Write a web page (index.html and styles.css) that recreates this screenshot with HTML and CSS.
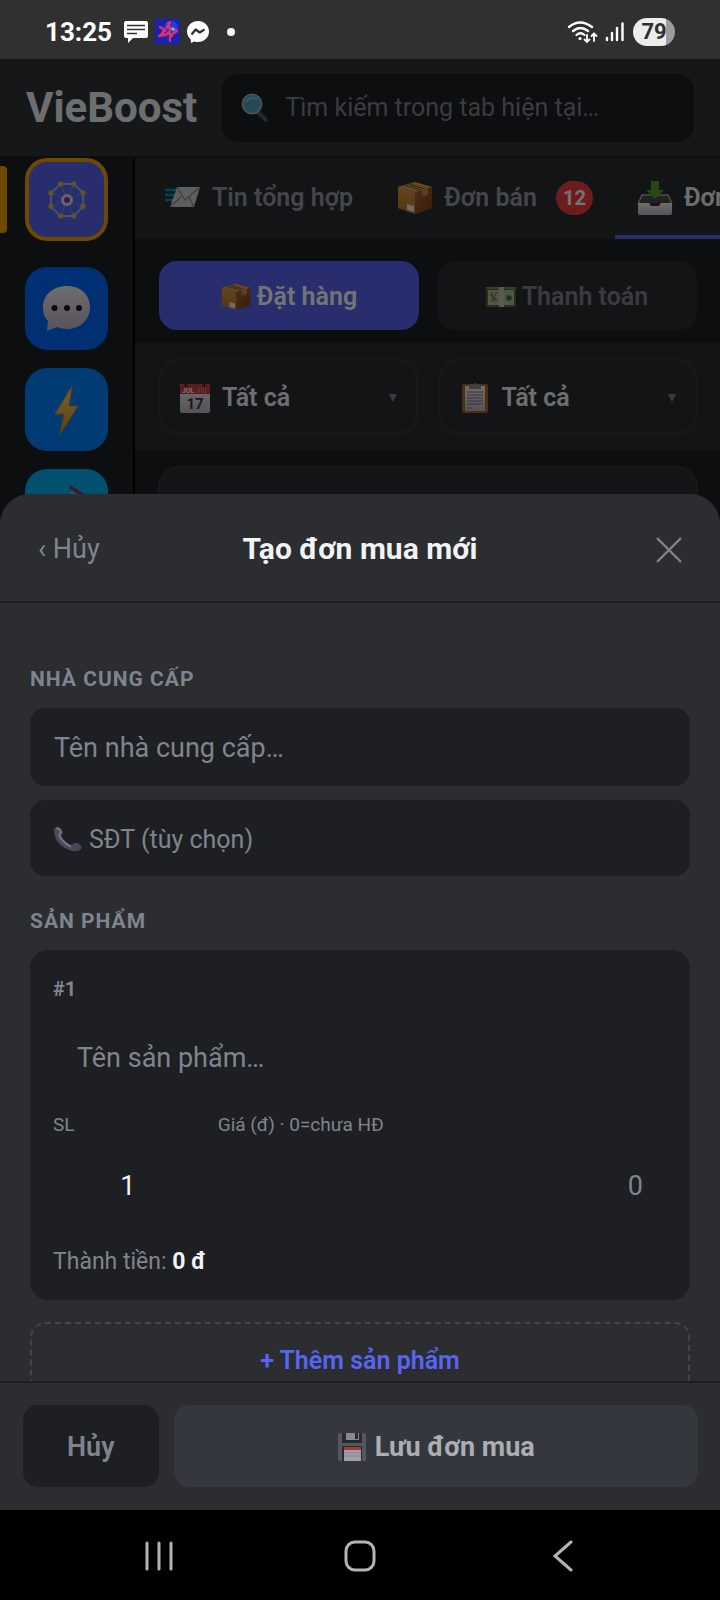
FILE: index.html
```html
<!DOCTYPE html>
<html lang="vi">
  <head>
    <meta charset="UTF-8" />
    <meta name="viewport" content="width=device-width, initial-scale=1.0" />
    <title>VieBoost</title>
    <link rel="stylesheet" href="styles.css">
  </head>
  <body>
    <svg class="sprite" width="0" height="0" aria-hidden="true">
      <defs>
        <linearGradient id="boxLeft" x1="0" y1="0" x2="0" y2="1">
          <stop offset="0" stop-color="#d99a4e" />
          <stop offset="1" stop-color="#bb7429" />
        </linearGradient>
        <linearGradient id="boxRight" x1="0" y1="0" x2="1" y2="1">
          <stop offset="0" stop-color="#a9682b" />
          <stop offset="1" stop-color="#7e4023" />
        </linearGradient>
        <linearGradient id="silver" x1="0" y1="0" x2="0" y2="1">
          <stop offset="0" stop-color="#f4f2f3" />
          <stop offset="1" stop-color="#c2b8c8" />
        </linearGradient>
        <linearGradient id="gold" x1="0" y1="0" x2="0" y2="1">
          <stop offset="0" stop-color="#ffd985" />
          <stop offset="1" stop-color="#e28a18" />
        </linearGradient>
      </defs>
      <symbol id="box" viewBox="0 0 36 36">
        <path d="M1 7 18 2 35 7v21L18 34 1 28Z" fill="#b3742e" />
        <path d="M1 7 18 12v22L1 28Z" fill="url(#boxLeft)" />
        <path d="M18 12 35 7v21L18 34Z" fill="url(#boxRight)" />
        <path d="M1 7 18 2 35 7 18 12Z" fill="#d9a055" />
        <path d="m8 5 16 5M12 4l16 5" stroke="#70481f" stroke-width="1" />
        <path d="m25 10 6-2v6l-3 2-3-1Z" fill="#c8924d" />
        <path d="m10 24 7 2v6l-7-2Z" fill="#f2ece5" />
      </symbol>
    </svg>

    <div class="status-bar">
      <div class="status-left">
        <span class="clock">13:25</span>
        <svg width="24" height="22" viewBox="0 0 24 22">
          <path d="M2 0h20q2 0 2 2v13q0 2-2 2H9l-5 5v-5H2q-2 0-2-2V2q0-2 2-2Z" fill="#fff" />
          <path d="M3 4.500h18M3 8.500h18M3 12.500h10" stroke="#303030" stroke-width="1.600" />
        </svg>
        <svg width="25" height="25" viewBox="0 0 25 25">
          <rect width="25" height="25" fill="#1a22b4" />
          <circle cx="16" cy="9" r="7" fill="#1e50e0" opacity=".7" />
          <path d="m15 3-3 6M5 8l5 3M4 17l6-5M12 8l5 2M5 17l6-1M15 22v-5M17 17l-4-3M22 12l-6 4M22 12l-6-3M8 12l1 4M15 12l-4 4M13 4l2 6" fill="none" stroke="#e92f62" stroke-width="2.200" stroke-linecap="round" />
          <circle cx="18" cy="10" r="1.500" fill="#68c8ff" />
        </svg>
        <svg width="22" height="22" viewBox="0 0 22 22">
          <path d="M11 0C5 0 0 4.400 0 10.400c0 3.200 1.400 5.900 3.600 7.700L4 22l3.200-1.600c1.200.4 2.500.5 3.800.5 6 0 11-4.500 11-10.500S17 0 11 0Z" fill="#fff" />
          <path d="m4.500 13.500 4.200-5 4 3 4.800-3.200" fill="none" stroke="#303030" stroke-width="2.200" stroke-linejoin="round" />
        </svg>
        <span class="status-dot"></span>
      </div>
      <div class="status-right">
        <svg width="31" height="24" viewBox="0 0 31 24" fill="none" stroke="#fff" stroke-width="2.300" stroke-linecap="round">
          <path d="M2 7q11-9 23 0M6 11q7.500-6 15 0M9.500 15q4-3.500 8 0" />
          <circle cx="13" cy="18.500" r="1.600" fill="#fff" stroke="none" />
          <path d="M20 15v7m-2.500-2.500L20 22l2.500-2.500M27 21v-7.500M24.500 16l2.500-2.500 2.500 2.500" stroke-width="1.800" />
        </svg>
        <svg width="19" height="20" viewBox="0 0 19 20" stroke="#fff" stroke-width="2.400" stroke-linecap="round">
          <path d="M2 16v2M7 11v7M12 6v12M17.500 1.500V18" />
        </svg>
        <span class="battery">79</span>
      </div>
    </div>

    <div class="app">
      <header class="header">
        <div class="logo">VieBoost</div>
        <label class="search">
          <svg width="28" height="30" viewBox="0 0 28 30">
            <path d="m17 19 8 8" stroke="#59525f" stroke-width="4" stroke-linecap="round" />
            <circle cx="11" cy="11" r="9.500" fill="#4fa5bd" stroke="#9cb5bb" stroke-width="2" />
            <path d="M5 9q4-6 11-3" stroke="#80cadc" stroke-width="2" fill="none" />
          </svg>
          <input type="text" placeholder="Tìm kiếm trong tab hiện tại…" aria-label="Tìm kiếm">
        </label>
      </header>

      <div class="layout">
        <nav class="sidebar">
          <button class="tile tile-main active" aria-label="Tổng quan">
            <svg width="38" height="38" viewBox="0 0 38 38">
              <path d="M12.500 3h13.400L35 12v13.500L25.900 35H12.500L3 25.500V12Z" fill="none" stroke="#a9adeb" stroke-width="2" />
              <path d="M12.500 3l13.400 32M25.900 3 12.500 35M3 12l32 13.500M3 25.500 35 12" stroke="#7e86e4" stroke-width="1.200" />
              <g fill="#c7b960">
                <circle cx="12.500" cy="3" r="2.700" /><circle cx="25.900" cy="3" r="2.700" />
                <circle cx="35" cy="12" r="2.700" /><circle cx="35" cy="25.500" r="2.700" />
                <circle cx="25.900" cy="35" r="2.700" /><circle cx="12.500" cy="35" r="2.700" />
                <circle cx="3" cy="25.500" r="2.700" /><circle cx="3" cy="12" r="2.700" />
              </g>
              <circle cx="19" cy="19" r="6" fill="#e3e2e8" />
              <circle cx="19" cy="19" r="3" fill="#7a37cc" />
            </svg>
          </button>
          <button class="tile tile-zalo" aria-label="Tin nhắn">
            <svg width="48" height="46" viewBox="0 0 48 46">
              <path d="M24 0C10 0 0 9 0 21c0 7 2 11 5 14l-1 10 10-4c3 1 6 2 10 2 14 0 23-10 23-22S38 0 24 0Z" fill="url(#silver)" />
              <circle cx="11.500" cy="22" r="3" fill="#1b1022" /><circle cx="24" cy="22" r="3" fill="#1b1022" /><circle cx="36" cy="22" r="3" fill="#1b1022" />
            </svg>
          </button>
          <button class="tile tile-fb" aria-label="Nhanh">
            <svg width="26" height="50" viewBox="0 0 26 50">
              <path d="M18 1 1 29h9L6 49 24 21h-9Z" fill="url(#gold)" stroke="#ce8923" stroke-width="1" stroke-linejoin="round" />
            </svg>
          </button>
          <button class="tile tile-post" aria-label="Bưu phẩm">
            <svg width="50" height="50" viewBox="0 0 50 50">
              <rect x="3" y="8" width="26" height="36" rx="2" fill="#a36c4b" />
              <path d="M3 9h26" stroke="#e0a37b" stroke-width="2" />
              <path d="m29 6 16 10v25H29Z" fill="#c9c5d0" />
              <path d="m28 1 18 11" stroke="#b31f43" stroke-width="3" />
            </svg>
          </button>
        </nav>

        <main class="content">
          <div class="tabs">
            <button class="tab">
              <svg width="36" height="24" viewBox="0 0 36 24">
                <path d="M0 4h14M0 9h12M0 14h10" stroke="#0a94c2" stroke-width="2.400" />
                <path d="M12 1h23l-6 20H5Z" fill="#d2d0d1" />
                <path d="m12 1 8 13L35 1M5 21l11-10M29 21l-5-10" fill="none" stroke="#88868a" stroke-width="1.200" />
              </svg>
              Tin tổng hợp
            </button>
            <button class="tab">
              <svg width="36" height="36"><use href="#box" /></svg>
              Đơn bán
              <span class="badge">12</span>
            </button>
            <button class="tab active">
              <svg width="36" height="36" viewBox="0 0 36 36">
                <path d="M5 15h26l4 8H1Z" fill="#4b474e" />
                <path d="M1 24 5 15h26l4 9" fill="none" stroke="#aaa6ac" stroke-width="1.600" />
                <path d="M1 23h11l2 3h8l2-3h11v10q0 2-2 2H3q-2 0-2-2Z" fill="url(#silver)" />
                <path d="M14 1h8v9h5l-9 9-9-9h5Z" fill="#5b9f24" />
              </svg>
              Đơn mua
            </button>
          </div>

          <div class="segments">
            <button class="segment active">
              <svg width="30" height="30"><use href="#box" /></svg>
              Đặt hàng
            </button>
            <button class="segment">
              <svg width="30" height="22" viewBox="0 0 30 22">
                <rect y="2" width="30" height="19" rx="1" fill="#536c39" />
                <rect x="2" y="4" width="26" height="15" fill="#b5bc98" />
                <path d="M0 2h30" stroke="#75944f" stroke-width="2" />
                <path d="M7 6q-3 2 0 5t0 5M4 8l7 6M11 6l-6 9" stroke="#68765b" stroke-width="1.300" fill="none" />
                <circle cx="23" cy="12" r="2.700" fill="#357347" />
                <path d="M13 1h5v20h-5Z" fill="#c9c5b8" />
              </svg>
              Thanh toán
            </button>
          </div>

          <div class="filters">
            <label class="filter">
              <svg width="30" height="30" viewBox="0 0 30 30">
                <rect y="1" width="30" height="29" rx="2" fill="url(#silver)" />
                <path d="M0 11V3q0-2 2-2h26q2 0 2 2v8Z" fill="#cf3c44" />
                <path d="M6 0v4M24 0v4" stroke="#601f25" stroke-width="3" />
                <path d="M17 5h10M17 7h10M17 9h10" stroke="#e8a0a2" stroke-dasharray="1 1" />
                <text class="cal-month" x="2" y="10">JUL</text>
                <text class="cal-day" x="15" y="26">17</text>
              </svg>
              <select aria-label="Thời gian"><option>Tất cả</option></select>
              <svg class="arrow" width="8" height="8" viewBox="0 0 8 8"><path d="M0 0h8L4 8Z" /></svg>
            </label>
            <label class="filter">
              <svg width="30" height="32" viewBox="0 0 30 32">
                <rect x="2" y="2" width="26" height="29" rx="2" fill="#ad6726" />
                <path d="M5 4h20v25H5Z" fill="url(#silver)" />
                <path d="M7 10h16M7 13h16M7 16h16M7 19h16M7 22h16M7 26h6" stroke="#77727c" stroke-width="1.200" />
                <path d="M9 7V3h4q2-4 4 0h4v4Z" fill="#918d94" />
              </svg>
              <select aria-label="Trạng thái"><option>Tất cả</option></select>
              <svg class="arrow" width="8" height="8" viewBox="0 0 8 8"><path d="M0 0h8L4 8Z" /></svg>
            </label>
          </div>

          <div class="orders">
            <div class="order-card"></div>
          </div>
        </main>
      </div>

      <div class="overlay">
        <form class="sheet">
          <div class="sheet-header">
            <button type="button" class="back-btn">‹ Hủy</button>
            <h1 class="sheet-title">Tạo đơn mua mới</h1>
            <button type="button" class="close-btn" aria-label="Đóng">
              <svg width="26" height="26" viewBox="0 0 26 26" stroke="currentColor" stroke-width="2.400">
                <path d="m1 1 24 24M25 1 1 25" />
              </svg>
            </button>
          </div>

          <div class="sheet-body">
            <label class="section-label" for="supplier">NHÀ CUNG CẤP</label>
            <input class="field" id="supplier" type="text" placeholder="Tên nhà cung cấp…">
            <label class="phone-field">
              <svg width="28" height="26" viewBox="0 0 28 26">
                <path d="M1 2q4-4 8 4 0 2-2 4 4 7 11 9 2-3 4-2 7 2 5 6-4 4-12 1Q1 18 0 6q0-3 1-4Z" fill="#4c4659" />
                <path d="M2 3q3-2 5 3L5 9q3 7 12 12" stroke="#77737e" stroke-width="2" fill="none" />
              </svg>
              <input type="tel" placeholder="SĐT (tùy chọn)" aria-label="SĐT">
            </label>

            <div class="section-label">SẢN PHẨM</div>
            <div class="product">
              <div class="product-index">#1</div>
              <input class="field" type="text" placeholder="Tên sản phẩm…" aria-label="Tên sản phẩm">
              <div class="product-row">
                <label class="cell">
                  SL
                  <input class="field qty" type="text" inputmode="numeric" value="1">
                </label>
                <label class="cell">
                  Giá (đ) · 0=chưa HĐ
                  <input class="field price" type="text" inputmode="numeric" placeholder="0">
                </label>
              </div>
              <div class="product-total">Thành tiền: <strong>0 đ</strong></div>
            </div>
            <button type="button" class="add-btn">+ Thêm sản phẩm</button>
          </div>

          <div class="sheet-footer">
            <button type="button" class="cancel-btn">Hủy</button>
            <button type="submit" class="save-btn" disabled>
              <svg width="30" height="30" viewBox="0 0 30 30">
                <path d="M3 1h24l2 2v26H3q-2 0-2-2V3q0-2 2-2Z" fill="#55575e" />
                <path d="M5 1h20v10H5ZM5 14h20v15H5Z" fill="#292a2f" />
                <path d="M9 1h13v7H9Z" fill="#88898d" />
                <path d="M18 1h3v6h-3Z" fill="#292a2f" />
                <path d="M7 15h17v14H7Z" fill="#a0a0aa" />
                <path d="M7 15h17v3H7Z" fill="#a83840" />
                <path d="M7 21h17M7 24h17" stroke="#888892" />
              </svg>
              Lưu đơn mua
            </button>
          </div>
        </form>
      </div>
    </div>

    <nav class="nav-bar">
      <button aria-label="Gần đây">
        <svg width="32" height="32" viewBox="0 0 32 32"><path d="M4 3v26M16 3v26M28 3v26" /></svg>
      </button>
      <button aria-label="Trang chủ">
        <svg width="32" height="32" viewBox="0 0 32 32"><rect x="2" y="2" width="28" height="28" rx="9" /></svg>
      </button>
      <button aria-label="Quay lại">
        <svg width="32" height="32" viewBox="0 0 32 32"><path d="M26 2 10 16l16 14" /></svg>
      </button>
    </nav>
  </body>
</html>
```
FILE: styles.css
```css
* {
  margin: 0;
  padding: 0;
  box-sizing: border-box;
}

body {
  display: flex;
  flex-direction: column;
  height: 100vh;
  background: #000;
  color: #f2f3f5;
  font-family: Roboto, "Noto Sans", sans-serif;
  overflow: hidden;
}

button,
input,
select {
  background: none;
  border: none;
  outline: none;
  color: inherit;
  font: inherit;
}

button {
  cursor: pointer;
}

svg {
  flex-shrink: 0;
}

.sprite {
  position: absolute;
}

/* Status bar */
.status-bar {
  display: flex;
  align-items: center;
  justify-content: space-between;
  flex-shrink: 0;
  height: 59px;
  padding: 4px 45px 0;
  background: #303030;
  color: #fff;
}

.status-left,
.status-right {
  display: flex;
  align-items: center;
  gap: 7px;
}

.clock {
  margin-right: 5px;
  font-size: 26px;
  font-weight: 700;
}

.status-dot {
  width: 8px;
  height: 8px;
  margin-left: 11px;
  border-radius: 50%;
  background: #fff;
}

.battery {
  width: 42px;
  margin-left: 2px;
  border-radius: 14px;
  background: linear-gradient(90deg, #ededed 79%, #9c9c9c 79%);
  color: #303030;
  font-size: 22px;
  font-weight: 700;
  line-height: 28px;
  text-align: center;
}

/* App */
.app {
  position: relative;
  display: flex;
  flex-direction: column;
  flex: 1;
  min-height: 0;
  overflow: hidden;
  background: #1e1f22;
}

.header {
  display: flex;
  align-items: center;
  flex-shrink: 0;
  gap: 25px;
  height: 99px;
  padding: 0 26px;
  background: #313338;
  border-bottom: 2px solid #1e1f22;
}

.logo {
  font-size: 42px;
  font-weight: 700;
}

.search {
  display: flex;
  align-items: center;
  flex: 1;
  gap: 16px;
  height: 68px;
  padding: 0 19px;
  border-radius: 16px;
  background: #1e1f22;
}

.search input {
  flex: 1;
  min-width: 0;
  font-size: 25px;
}

input::placeholder {
  color: #80848e;
  opacity: 1;
}

.layout {
  display: flex;
  flex: 1;
  min-height: 0;
}

.sidebar {
  display: flex;
  flex-direction: column;
  align-items: center;
  gap: 18px;
  width: 135px;
  flex-shrink: 0;
  border-right: 2px solid #000;
}

.tile {
  display: flex;
  align-items: center;
  justify-content: center;
  flex-shrink: 0;
  width: 83px;
  height: 83px;
  border-radius: 22px;
}

.tile-main {
  position: relative;
  margin-bottom: 8px;
  background: #5865f2;
}

.tile-main.active {
  border: 4px solid #f59f0b;
}

.tile-main.active::before {
  content: "";
  position: absolute;
  top: 4px;
  left: -29px;
  width: 7px;
  height: 67px;
  border-radius: 0 4px 4px 0;
  background: #f59f0b;
}

.tile-zalo {
  background: #0068ff;
}

.tile-fb {
  background: #0084ff;
}

.tile-post {
  background: #00b4f5;
}

.content {
  flex: 1;
  min-width: 0;
}

.tabs {
  display: flex;
  height: 81px;
  padding: 0 8px;
  background: #2b2d31;
  overflow: hidden;
}

.tab {
  display: flex;
  align-items: center;
  flex-shrink: 0;
  gap: 11px;
  padding: 2px 22px 0;
  border-bottom: 4px solid transparent;
  color: #949ba4;
  font-size: 25px;
  font-weight: 600;
}

.tab.active {
  border-color: #5865f2;
  color: #f2f3f5;
}

.badge {
  min-width: 37px;
  margin-left: 8px;
  border-radius: 17px;
  background: #f23f43;
  color: #fff;
  font-size: 20px;
  font-weight: 700;
  line-height: 34px;
  text-align: center;
}

.segments {
  display: flex;
  gap: 18px;
  padding: 22px 23px 13px 24px;
}

.segment {
  display: flex;
  align-items: center;
  justify-content: center;
  flex: 1;
  gap: 6px;
  height: 69px;
  padding-top: 2px;
  border-radius: 18px;
  background: #2b2d31;
  color: #80848e;
  font-size: 25px;
  font-weight: 600;
}

.segment.active {
  background: #5865f2;
  color: #fff;
}

.filters {
  display: flex;
  gap: 19px;
  padding: 15px 22px 15px 23px;
  background: #2b2d31;
}

.filter {
  display: flex;
  align-items: center;
  flex: 1;
  gap: 12px;
  height: 77px;
  min-width: 0;
  padding: 2px 19px 0;
  border: 3px solid #35373c;
  border-radius: 22px;
}

.filter select {
  flex: 1;
  min-width: 0;
  appearance: none;
  font-size: 25px;
  font-weight: 600;
}

.arrow {
  fill: #80848e;
}

.cal-month {
  fill: #fff;
  font-size: 7px;
  font-weight: 700;
}

.cal-day {
  fill: #3a3a3e;
  font-size: 15px;
  font-weight: 700;
  text-anchor: middle;
}

.orders {
  padding: 16px 22px 16px 23px;
}

.order-card {
  height: 240px;
  border: 2px solid #35373c;
  border-radius: 22px;
  background: #2b2d31;
}

/* Bottom sheet */
.overlay {
  position: absolute;
  inset: 0;
  display: flex;
  align-items: flex-end;
  background: rgba(0, 0, 0, 0.55);
}

.sheet {
  display: flex;
  flex-direction: column;
  width: 100%;
  height: 70%;
  border-radius: 30px 30px 0 0;
  background: #2b2d31;
}

.sheet-header {
  display: grid;
  grid-template-columns: 1fr auto 1fr;
  align-items: center;
  flex-shrink: 0;
  height: 109px;
  padding: 2px 38px 0;
  border-bottom: 2px solid #1e1f22;
}

.back-btn {
  justify-self: start;
  color: #80848e;
  font-size: 27px;
}

.sheet-title {
  font-size: 30px;
  font-weight: 700;
}

.close-btn {
  display: flex;
  justify-self: end;
  padding-top: 2px;
  color: #80848e;
}

.sheet-body {
  flex: 1;
  min-height: 0;
  padding: 31px 30px 0;
  overflow: hidden;
}

.section-label {
  display: block;
  margin: 31px 0 15px;
  color: #80848e;
  font-size: 21px;
  font-weight: 700;
  line-height: 28px;
  letter-spacing: 1px;
}

.field {
  display: block;
  width: 100%;
  height: 78px;
  padding: 2px 24px 0;
  border-radius: 15px;
  background: #1e1f22;
  color: #f2f3f5;
  font-size: 27px;
}

.phone-field {
  display: flex;
  align-items: center;
  gap: 7px;
  height: 76px;
  margin-top: 14px;
  padding: 2px 24px 0;
  border-radius: 15px;
  background: #1e1f22;
  font-size: 25px;
}

.phone-field input {
  flex: 1;
  min-width: 0;
}

.product {
  padding: 24px 23px 22px;
  border-radius: 18px;
  background: #1e1f22;
  color: #80848e;
}

.product-index {
  margin-bottom: 14px;
  font-size: 20px;
  font-weight: 700;
  line-height: 30px;
}

.product-row {
  display: grid;
  grid-template-columns: 1fr 3fr;
  gap: 15px;
  margin: 17px 0 22px;
}

.cell {
  font-size: 19px;
  line-height: 24px;
}

.cell .field {
  margin-top: 9px;
}

.qty {
  text-align: center;
}

.price {
  text-align: right;
}

.product-total {
  font-size: 23px;
  line-height: 32px;
}

.product-total strong {
  color: #f2f3f5;
}

.add-btn {
  width: 100%;
  height: 76px;
  margin-top: 22px;
  border: 2px dashed #43454b;
  border-radius: 15px;
  color: #5865f2;
  font-size: 25px;
  font-weight: 600;
}

.sheet-footer {
  display: flex;
  flex-shrink: 0;
  gap: 15px;
  padding: 22px 22px 23px 23px;
  border-top: 2px solid #1e1f22;
}

.cancel-btn,
.save-btn {
  height: 82px;
  padding: 2px 44px 0;
  border-radius: 15px;
  font-size: 27px;
  font-weight: 600;
}

.cancel-btn {
  background: #1e1f22;
  color: #80848e;
}

.save-btn {
  display: flex;
  align-items: center;
  justify-content: center;
  flex: 1;
  gap: 8px;
  background: #35373e;
  color: #adaeb1;
  font-weight: 700;
}

/* System navigation */
.nav-bar {
  display: flex;
  align-items: center;
  justify-content: space-around;
  flex-shrink: 0;
  height: 90px;
  padding: 2px 59px 0;
}

.nav-bar button {
  display: flex;
}

.nav-bar svg {
  fill: none;
  stroke: #b4b4b4;
  stroke-width: 3;
  stroke-linecap: round;
}
```
